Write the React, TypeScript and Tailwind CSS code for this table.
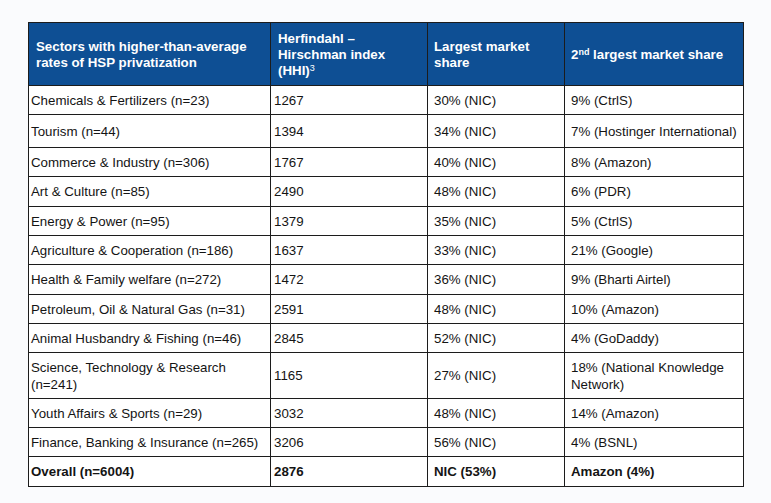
import React from 'react';

type Row = { sector: string; hhi: string; largest: string; second: string; h?: string };

const rows: Row[] = [
  { sector: 'Chemicals & Fertilizers (n=23)', hhi: '1267', largest: '30% (NIC)', second: '9% (CtrlS)' },
  { sector: 'Tourism (n=44)', hhi: '1394', largest: '34% (NIC)', second: '7% (Hostinger International)', h: 'h-[33px]' },
  { sector: 'Commerce & Industry (n=306)', hhi: '1767', largest: '40% (NIC)', second: '8% (Amazon)' },
  { sector: 'Art & Culture (n=85)', hhi: '2490', largest: '48% (NIC)', second: '6% (PDR)', h: 'h-[30px]' },
  { sector: 'Energy & Power (n=95)', hhi: '1379', largest: '35% (NIC)', second: '5% (CtrlS)' },
  { sector: 'Agriculture & Cooperation (n=186)', hhi: '1637', largest: '33% (NIC)', second: '21% (Google)' },
  { sector: 'Health & Family welfare (n=272)', hhi: '1472', largest: '36% (NIC)', second: '9% (Bharti Airtel)', h: 'h-[30px]' },
  { sector: 'Petroleum, Oil & Natural Gas (n=31)', hhi: '2591', largest: '48% (NIC)', second: '10% (Amazon)' },
  { sector: 'Animal Husbandry & Fishing (n=46)', hhi: '2845', largest: '52% (NIC)', second: '4% (GoDaddy)' },
  { sector: 'Science, Technology & Research (n=241)', hhi: '1165', largest: '27% (NIC)', second: '18% (National Knowledge Network)', h: 'h-[46px]' },
  { sector: 'Youth Affairs & Sports (n=29)', hhi: '3032', largest: '48% (NIC)', second: '14% (Amazon)' },
  { sector: 'Finance, Banking & Insurance (n=265)', hhi: '3206', largest: '56% (NIC)', second: '4% (BSNL)' },
];

export default function App() {
  return (
    <div className="min-h-screen w-full bg-[#fafbfd] pt-[22px] pl-[28px] font-['Liberation_Sans',Arial,sans-serif]">
      <table className="w-[715px] border-collapse table-fixed text-[13.3px] leading-[17px] text-[#141414]">
        <colgroup>
          <col className="w-[242px]" />
          <col className="w-[157px]" />
          <col className="w-[137px]" />
          <col className="w-[179px]" />
        </colgroup>
        <thead>
          <tr className="h-[63px] bg-[#0e4f94] text-white font-bold text-[13.3px] leading-[16px]">
            <th className="border border-[#1c1c1c] px-[7px] pt-[2px] text-left align-middle font-bold">
              Sectors with higher-than-average rates of HSP privatization
            </th>
            <th className="border border-[#1c1c1c] px-[7px] pt-[2px] text-left align-middle font-bold">
              Herfindahl –<br />Hirschman index<br />(HHI)<sup className="text-[9px] font-normal leading-none">3</sup>
            </th>
            <th className="border border-[#1c1c1c] px-[6px] pt-[2px] text-left align-middle font-bold">
              Largest market share
            </th>
            <th className="border border-[#1c1c1c] px-[6px] pt-[2px] text-left align-middle font-bold">
              2<sup className="text-[9px] leading-none">nd</sup> largest market share
            </th>
          </tr>
        </thead>
        <tbody className="bg-white">
          {rows.map((r) => (
            <tr key={r.sector} className={r.h ?? 'h-[29px]'}>
              <td className="border border-[#1c1c1c] pl-[2px] pr-[4px] align-middle">{r.sector}</td>
              <td className="border border-[#1c1c1c] pl-[3px] align-middle">{r.hhi}</td>
              <td className="border border-[#1c1c1c] pl-[6px] align-middle">{r.largest}</td>
              <td className="border border-[#1c1c1c] pl-[6px] pr-[4px] align-middle">{r.second}</td>
            </tr>
          ))}
          <tr className="h-[30px] font-bold">
            <td className="border border-[#1c1c1c] pl-[2px] align-middle">Overall (n=6004)</td>
            <td className="border border-[#1c1c1c] pl-[3px] align-middle">2876</td>
            <td className="border border-[#1c1c1c] pl-[6px] align-middle">NIC (53%)</td>
            <td className="border border-[#1c1c1c] pl-[6px] align-middle">Amazon (4%)</td>
          </tr>
        </tbody>
      </table>
    </div>
  );
}
